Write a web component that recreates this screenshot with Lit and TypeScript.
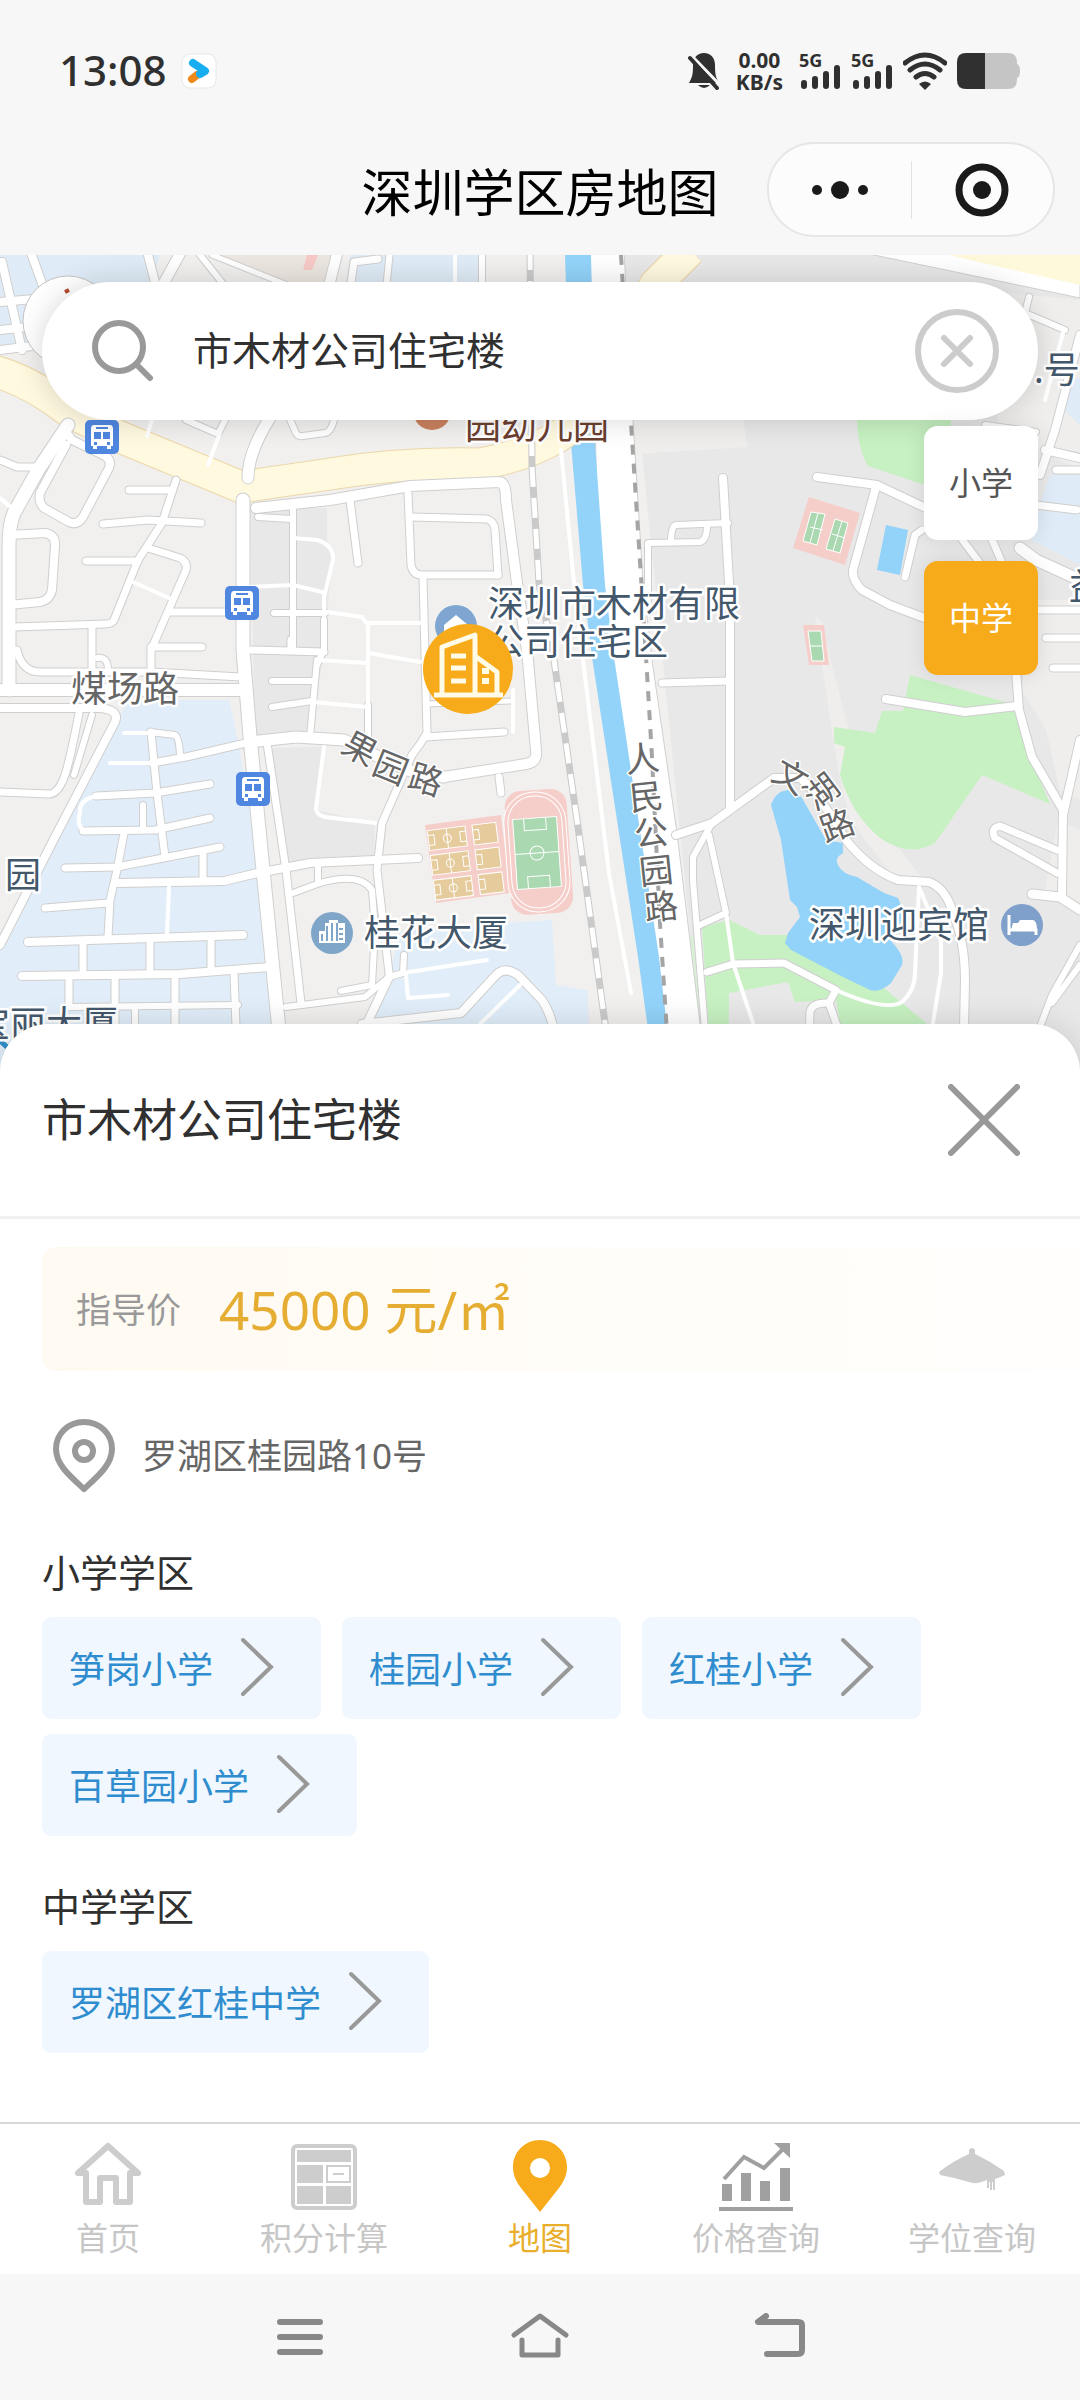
import { LitElement, html, svg, css } from 'lit';
import { customElement, property, state } from 'lit/decorators.js';
import { classMap } from 'lit/directives/class-map.js';

interface SchoolGroup {
  title: string;
  schools: string[];
}

interface TabLink {
  name: string;
  href: string;
  icon: unknown;
}

// Outlined white streets: [stroke width, path]
type Road = [number, string];

const ROADS: Road[] = [
  // West side
  [13, 'M68 425 L38 470 L14 513 Q9 525 9 545 V690'],
  [8, 'M66 432 L72 440 L105 456 Q112 460 109 468 L83 517 Q77 526 69 522 L44 508 Q38 502 40 493 L66 445'],
  [7, 'M0 460 L17 467 H38'],
  [8, 'M9 535 L45 533 Q56 535 55 546 L52 590 Q50 600 40 602 L9 605'],
  [7, 'M129 490 H170'],
  [7, 'M176 480 L162 523 L138 560 L114 620 Q112 624 105 624 L14 627'],
  [7, 'M103 524 L148 520 L201 523'],
  [7, 'M86 561 H138'],
  [7, 'M148 548 L180 558 Q188 562 186 570 L151 650 V678'],
  [7, 'M169 612 H243'],
  [7, 'M92 625 V668'],
  [6, 'M97 658 Q107 656 108 668'],
  [7, 'M151 647 H202'],
  [12, 'M0 690 H245'],
  [7, 'M17 650 Q22 672 40 672 L151 672 L241 677'],
  [8, 'M148 255 L157 290'],
  [10, 'M182 250 L160 290'],
  [6, 'M200 255 L228 290'],
  [5, 'M212 255 L290 286'],
  [10, 'M338 250 L328 290'],
  [7, 'M350 290 L354 262 L378 259'],
  [6, 'M390 250 L386 290'],
  [6, 'M482 250 V290'],
  [11, 'M275 410 Q248 450 248 478'],
  [6, 'M186 420 L218 434 L226 418'],
  [6, 'M288 415 L296 433 Q298 437 303 436 L325 433 Q332 432 335 415'],
  [8, 'M0 708 H100 Q120 710 115 722 L55 837 L0 945'],
  [7, 'M79 713 Q70 760 65 775 Q58 795 48 794 L0 792'],
  [6, 'M92 715 L74 775'],
  [8, 'M0 302 L45 298 M0 330 L45 325 M0 350 L48 344 M2 262 L22 350 M30 250 L48 300'],
  // Blue blocks
  [6, 'M150 732 L175 735 Q179 737 180 755'],
  [7, 'M151 732 L157 793 L165 857'],
  [7, 'M152 763 L186 757 L250 742'],
  [7, 'M96 796 L155 793 L210 784'],
  [7, 'M83 831 L155 830 L210 818'],
  [6, 'M143 805 V830'],
  [7, 'M65 868 L117 867 L220 847'],
  [7, 'M124 833 L117 870 L110 900 L108 937'],
  [8, 'M119 883 L224 881 L258 873 L310 863 L418 858'],
  [7, 'M203 853 V880'],
  [7, 'M45 908 L108 903'],
  [8, 'M28 942 L243 935'],
  [7, 'M83 943 V973 M150 940 V973 M211 938 V970'],
  [8, 'M22 976 L180 974 L269 967'],
  [7, 'M69 977 V1007 M115 977 V1080 M175 975 V1080 M234 973 L238 1080'],
  [6, 'M72 1007 L238 1005 M135 1010 V1060'],
  // Centre
  [13, 'M243 500 L243 650 L250 737 L263 870 L284 1080'],
  [10, 'M256 508 L330 500 L410 486 L499 482 Q506 482 506 500 L517 583 L527 650 L536 750 Q538 762 526 764 L444 777'],
  [6, 'M258 517 L291 519'],
  [6, 'M293 510 V650'],
  [6, 'M317 660 L310 737'],
  [6, 'M324 620 V650 L317 665'],
  [6, 'M274 613 L325 613'],
  [7, 'M251 650 L324 652 M291 640 V650'],
  [6, 'M272 681 H312 M272 707 L312 701'],
  [11, 'M250 742 L296 737 L344 740 L379 757 L413 772 L444 777'],
  [7, 'M350 500 L358 563'],
  [7, 'M408 493 L411 565 Q413 575 422 575 H498'],
  [7, 'M412 517 L487 519 Q494 521 495 530 L498 575'],
  [7, 'M423 578 L427 733 Q420 745 412 755 L382 823 L377 870 L389 973'],
  [6, 'M368 705 V735'],
  [7, 'M425 737 L504 732'],
  [5, 'M427 704 L510 701'],
  [7, 'M499 777 L501 793'],
  [7, 'M267 743 L286 870 L301 1003'],
  [6, 'M293 893 L320 883 Q360 872 372 890 L375 930 L372 985 L341 991'],
  [6, 'M318 867 V883'],
  [6, 'M286 1007 L365 997 L389 977 L403 973 L404 955'],
  [8, 'M389 977 L340 1080'],
  [8, 'M362 1024 L461 1013 L496 975 Q505 966 518 975 L542 1000 Q552 1015 556 1040'],
  // East side
  [8, 'M723 478 L730 600 V807'],
  [6, 'M728 523 L676 525 Q671 526 671 542 M648 600 V543 L700 542 Q707 540 707 525'],
  [8, 'M817 477 L877 485 L930 510 L960 525'],
  [8, 'M876 487 L853 570 Q852 580 862 590 L890 605 L930 620'],
  [7, 'M922 530 L915 535 L905 577'],
  [7, 'M955 530 L985 570 M990 535 L1006 572'],
  [11, 'M1020 548 L1036 560 L1080 580'],
  [7, 'M1036 505 L1077 510'],
  [7, 'M1056 470 H1080'],
  [8, 'M1045 450 L1080 458'],
  [8, 'M1080 335 L1055 430 L1040 475'],
  [6, 'M1029 297 L1025 313 L1065 330'],
  [6, 'M985 425 L1036 432'],
  [7, 'M1030 610 H1080'],
  [7, 'M1046 638 H1080 M1053 668 H1080'],
  [7, 'M662 683 L728 681'],
  [8, 'M676 835 L712 823 L774 778 L800 778 Q820 795 846 840 Q870 870 898 880 L929 882 Q945 888 952 910 Q965 940 965 980 L963 1080'],
  [6, 'M712 823 L693 857 V880 L709 1080'],
  [6, 'M709 835 L726 913 L700 925'],
  [7, 'M707 972 L733 964 L784 963 L836 990 L829 1003 Q812 1002 810 1012 L808 1080 M829 1003 L842 1040'],
  [8, 'M886 699 L965 712 L1017 706'],
  [8, 'M1016 670 L1019 710 L1032 757 L1063 810 L1062 897'],
  [7, 'M1057 850 L1000 826 Q990 828 995 838 L1057 873'],
  [8, 'M1080 740 L1063 815'],
  [9, 'M1032 894 L1060 897 L1080 910'],
  [6, 'M1080 945 L1052 995 L1035 1040 M1080 965 L1052 1003'],
];

// Hairline footpaths without an outline
const PATHS = [
  'M133 582 L169 598',
  'M220 433 L208 465',
  'M152 420 L147 436',
  'M0 498 L14 510',
  'M293 538 L317 540 Q334 545 333 560 L324 597 V643',
  'M251 587 L293 585 L322 592',
  'M327 612 L362 617 L368 625 V705 M368 623 H425',
  'M317 660 L367 663 M368 653 L420 662 M313 702 L367 707',
  'M324 747 L316 808 Q316 815 325 817 L375 823',
  'M513 732 V690',
  'M96 796 Q79 800 80 812 Q76 825 84 831',
  'M110 763 H152 M124 733 H152',
  'M169 887 L167 935',
  'M406 975 L408 998 L448 995 M403 973 L487 960',
  'M520 985 L480 1024',
  'M561 450 L574 583 L583 660 L609 873 L631 993',
  'M726 913 L733 963 L753 1023',
  'M836 990 Q885 1012 902 1002 Q915 990 915 973 L919 887 L941 940 V973 L933 1023',
  'M455 255 V290',
  'M1063 333 L1045 400',
];

const BUS_STOPS = [[102, 437], [242, 603], [253, 789]];

const mapArt = svg`
  <rect x="0" y="255" width="1080" height="825" fill="#f1f0ee"></rect>
  <!-- blocks -->
  <path fill="#dfebf6" d="M0 255 H160 L150 290 H50 L45 345 L0 350 Z M350 255 H486 V290 H345 Z"></path>
  <path fill="#ece6e0" d="M210 255 H335 L325 290 H290 Z"></path>
  <path fill="#f6c9c6" d="M307 255 H318 L312 270 H303 Z"></path>
  <path fill="#e1eef9" d="M124 708 L130 700 H229 L238 740 L255 840 L280 1080 H0 V947 L55 837 Z"></path>
  <path fill="#e1eef9" d="M389 975 L400 932 L470 925 L552 920 L556 985 L588 990 L590 1080 H340 Z"></path>
  <path fill="#e8e8e8" d="M250 508 H327 V540 L332 560 L324 650 L310 737 H255 Z
    M270 748 L324 747 L316 810 L375 823 L374 862 L286 868 Z"></path>
  <path fill="#e8e8e8" d="M622 255 H1080 V1080 H705 Z"></path>
  <path fill="#efeeec" d="M632 420 H743 L748 447 L636 454 Z M1022 690 L1030 600 H1080 V800 L1060 790 L1046 730 Z
    M975 290 L1080 300 V470 L1000 430 Z M1058 820 L1080 830 V905 L1045 890 Z"></path>
  <path fill="#efeeec" d="M778 578 Q800 600 822 622 L832 665 L848 727 L870 825 L900 850 L926 882 L890 872 L850 820 L838 770 L822 665 L815 615 Z"></path>
  <path fill="#dfebf6" d="M1050 475 H1080 V565 L1028 538 Z M1068 378 H1080 V425 L1064 410 Z"></path>
  <!-- parks -->
  <g fill="#c7f1c2">
    <path d="M857 415 H951 V480 L922 484 L868 466 Q858 450 857 420 Z"></path>
    <path d="M910 675 L1005 702 L1018 710 L1025 745 L1050 804 L982 775 L935 843 Q910 858 880 838 Q852 815 840 775 L845 747 L834 743 V727 L875 733 L882 711 L903 711 Z"></path>
    <path d="M702 927 L729 920 L760 935 H790 L884 988 L926 1023 L980 1080 H870 L836 1000 L795 1002 L788 982 L729 993 L728 1080 H712 Z M836 1000 L926 1023 V1080 H850 Z"></path>
  </g>
  <path fill="#d9efd6" d="M688 937 H696 L710 1080 H700 Z"></path>
  <!-- sports grounds -->
  <path fill="#f5ceca" d="M809 497 L860 513 L845 565 L793 548 Z M803 625 H824 L829 665 H809 Z M425 825 L501 815 L510 893 L436 903 Z"></path>
  <path fill="#a9d8b1" stroke="#fff" d="M811 512 L825 514 L817 545 L803 541 Z M835 519 L848 523 L840 553 L826 549 Z M808 631 H821 L824 661 H812 Z
    M810 527 L823 530 M832 534 L845 538 M809 646 H823 M818 513 L810 543 M842 521 L833 551"></path>
  <g transform="rotate(-7 467 859)">
    ${[0, 1, 2].map((row) => svg`
      <rect x="431" y=${826 + row * 25} width="38" height="20" fill="#e6cb9c" stroke="#fff"></rect>
      <rect x="476" y=${826 + row * 25} width="24" height="20" fill="#e6cb9c" stroke="#fff"></rect>
      <circle cx="450" cy=${836 + row * 25} r="4" fill="none" stroke="#fff"></circle>
      <path d=${`M431 ${831 + row * 25} h6 v10 h-6 M469 ${831 + row * 25} h-6 v10 h6 M450 ${826 + row * 25} v20 M476 ${831 + row * 25} h6 v10 h-6`} fill="none" stroke="#fff"></path>
    `)}
  </g>
  <g transform="rotate(-4 537 853)">
    <rect x="508" y="790" width="62" height="124" rx="16" fill="#f5ceca"></rect>
    <rect x="506" y="792" width="62" height="120" rx="30" fill="#f5ceca" stroke="#fff"></rect>
    <rect x="510" y="796" width="54" height="112" rx="26" fill="none" stroke="#fff"></rect>
    <rect x="515" y="818" width="44" height="70" fill="#a9d8b1" stroke="#fff"></rect>
    <path d="M515 853 h44 M526 818 v12 h22 v-12 M526 888 v-12 h22 v12" fill="none" stroke="#fff"></path>
    <circle cx="537" cy="853" r="7" fill="none" stroke="#fff"></circle>
  </g>
  <!-- expressway and river -->
  <path fill="#fff" stroke="#d0d0d0" d="M590 250 H624 L633 420 L643 583 L652 660 L677 833 L708 1090 H660 L600 600 Z"></path>
  <path fill="#93d3fa" d="M565 255 H591 L595 443 L605 585 L614 657 L659 957 L673 1080 H655 L638 957 L592 657 L583 585 L571 443 Z"></path>
  <path fill="#93d3fa" d="M886 525 L908 530 L900 575 L877 570 Z"></path>
  <path fill="none" stroke="#a5a5a5" stroke-width="4" stroke-dasharray="10 9"
    d="M621 255 L631 423 L641 577 L647 673 L652 757 L660 923 L670 1080"></path>
  <!-- yellow avenue -->
  <path fill="#fff" stroke="#cfcfcf" d="M850 250 L1080 298 V250 Z"></path>
  <path fill="#fff9dc" d="M926 250 L1080 285 V250 Z"></path>
  <g fill="none" stroke-linejoin="round">
    <path stroke="#ecd7a8" stroke-width="33" d="M-10 370 Q30 380 70 412 L120 437 L241 487 L330 474 Q400 462 480 464 Q560 450 600 400 L655 285 L690 250"></path>
    <path stroke="#fff9e0" stroke-width="31" d="M-10 370 Q30 380 70 412 L120 437 L241 487 L330 474 Q400 462 480 464 Q560 450 600 400 L655 285 L690 250"></path>
  </g>
  <!-- railway -->
  <g fill="none">
    <path stroke="#cacaca" stroke-width="7" d="M530 250 L532 467 L539 583 L554 660 L578 827 L605 1023 L612 1080"></path>
    <path stroke="#fff" stroke-width="5" stroke-dasharray="20 11" d="M530 250 L532 467 L539 583 L554 660 L578 827 L605 1023 L612 1080"></path>
  </g>
  <!-- lake -->
  <path fill="#93d3fa" d="M771 805 Q776 790 790 790 Q800 792 806 805 L826 840 L843 843 V853 Q834 858 838 865 Q842 874 857 877 L884 893 L898 898 L905 915 L890 940 Q905 955 902 965 L891 983 Q880 993 870 990 L843 977 L791 950 L785 943 L788 933 L800 917 L797 907 L790 900 L781 840 Z"></path>
  <!-- streets -->
  <g fill="none" stroke-linecap="round" stroke-linejoin="round">
    ${ROADS.map(([w, d]) => svg`<path d=${d} stroke="#cfcfcf" stroke-width=${w + 2}></path>`)}
    ${PATHS.map((d) => svg`<path d=${d} stroke="#fff" stroke-width="4"></path>`)}
    ${ROADS.map(([w, d]) => svg`<path d=${d} stroke="#fff" stroke-width=${w}></path>`)}
  </g>
  <!-- points of interest -->
  ${BUS_STOPS.map(([x, y]) => svg`
    <g transform=${`translate(${x} ${y})`}>
      <rect x="-17" y="-17" width="34" height="34" rx="5" fill="#4f86e0"></rect>
      <path fill="#fff" d="M-8 -12 H8 Q11 -12 11 -8 V9 H9 V12 H5 V9 H-5 V12 H-9 V9 H-11 V-8 Q-11 -12 -8 -12 Z"></path>
      <path fill="#4f86e0" d="M-6 -10 H6 V-8 H-6 Z M-8 -5 H-1 V2 H-8 Z M1 -5 H8 V2 H1 Z M-8 5 H-5 V8 H-8 Z M5 5 H8 V8 H5 Z"></path>
    </g>
  `)}
  <circle cx="432" cy="411" r="19" fill="#c9805f"></circle>
  <path d="M422 416 H442" stroke="#fff" stroke-width="4"></path>
  <circle cx="332" cy="933" r="21" fill="#7fa6c9"></circle>
  <path fill="#fff" d="M319 943 V931 H325 V923 H329 V920 H338 V923 H345 V943 Z"></path>
  <path stroke="#7fa6c9" stroke-width="2" d="M327 926 V941 M332 923 V941 M337 923 V941 M339 929 H343 M339 934 H343 M339 939 H343 M322 934 V941"></path>
  <circle cx="1022" cy="925" r="21" fill="#7fa0cb"></circle>
  <path fill="none" stroke="#fff" stroke-width="3" d="M1009 915 V935 M1009 930 H1036 V935"></path>
  <path fill="#fff" d="M1013 923 H1018 L1020 920 H1033 Q1037 921 1037 930 H1011 Z"></path>
  <circle cx="456" cy="626" r="21" fill="#7fa6d0"></circle>
  <path fill="#fff" d="M444 625 L456 615 L468 625 V640 H444 Z"></path>
  <circle cx="68" cy="321" r="45" fill="#fff" stroke="#c4c4c4"></circle>
  <path d="M65 292 L69 290" stroke="#b5482c" stroke-width="4"></path>
  <path d="M0 1041 L7 1047" stroke="#2f8fc8" stroke-width="5"></path>
  <!-- labels -->
  <g class="label place">
    <text x="465" y="439" class="brown">园幼儿园</text>
    <text x="1034" y="383">.号</text>
    <text x="1069" y="600">益</text>
    <text x="488" y="617">深圳市木材有限</text>
    <text x="488" y="655">公司住宅区</text>
    <text x="364" y="946">桂花大厦</text>
    <text x="809" y="938">深圳迎宾馆</text>
    <text x="5" y="888">园</text>
    <text x="-26" y="1037">宝丽大厦</text>
  </g>
  <g class="label street">
    <text x="71" y="702">煤场路</text>
    <g class="turned">
      <text transform="translate(360 748) rotate(28)">果</text>
      <text transform="translate(391 767) rotate(22)">园</text>
      <text transform="translate(426 779) rotate(17)">路</text>
      <text transform="translate(642 758) rotate(-6)">人</text>
      <text transform="translate(646 796) rotate(-6)">民</text>
      <text transform="translate(651 832) rotate(-6)">公</text>
      <text transform="translate(656 870) rotate(-6)">园</text>
      <text transform="translate(661 906) rotate(-6)">路</text>
      <text transform="translate(791 776) rotate(30)">文</text>
      <text transform="translate(821 791) rotate(-37)">湖</text>
      <text transform="translate(837 825) rotate(-20)">路</text>
    </g>
  </g>
  <!-- selected estate marker -->
  <circle cx="468" cy="669" r="45" fill="#f7ab1b"></circle>
  <path fill="none" stroke="#fffbe6" stroke-width="5" stroke-linejoin="round"
    d="M434 695 H503 M442 695 V647 L475 635 V695 M475 656 L497 672 V695 M451 656 H466 M451 668 H466 M451 681 H466"></path>
  <path fill="#fffbe6" d="M482 668 H489 V674 H482 Z M482 678 H489 V684 H482 Z"></path>
`;

const HOME_ICON = svg`
  <path d="M6 33 L36 6 L66 33 M14 33 V62 H28 V38 H44 V62 H58 V33 M6 33 H14 M58 33 H66" fill="none" stroke="#cdcdcd" stroke-width="6" stroke-linejoin="round" stroke-linecap="round"></path>`;
const CALC_ICON = svg`
  <rect x="5" y="6" width="62" height="62" rx="4" fill="none" stroke="#cdcdcd" stroke-width="4"></rect>
  <path fill="#cdcdcd" d="M9 10 H63 V22 H9 Z M9 25 H35 V43 H9 Z M9 46 H35 V64 H9 Z M38 46 H63 V64 H38 Z"></path>
  <path d="M39 26 H62 V42 H39 Z M45 34 H56" fill="none" stroke="#cdcdcd" stroke-width="2"></path>`;
const PIN_ICON = svg`
  <path fill="#f7ab1b" fill-rule="evenodd" d="M36 0 C51 0 63 12 63 27 C63 35 60 41 55 48 L36 72 L17 48 C12 41 9 35 9 27 C9 12 21 0 36 0 Z M36 18 A10 10 0 1 0 36 38 A10 10 0 1 0 36 18 Z"></path>`;
const CHART_ICON = svg`
  <path fill="#a0a0a0" d="M-1 67 H73 V71 H-1 Z M2 44 H12 V61 H2 Z M21 33 H31 V61 H21 Z M40 41 H50 V61 H40 Z M60 28 H70 V61 H60 Z M54 3 H70 V18 Z"></path>
  <path d="M4 39 L24 17 L44 28 L64 8" fill="none" stroke="#a0a0a0" stroke-width="4"></path>`;
const CAP_ICON = svg`
  <path fill="#cdcdcd" d="M33 10 Q36 6 39 10 V14 Q54 21 68 31 L69 35 L62 38 L59 39 V50 H57 V42 L56 42 V50 H54 V42 L53 42 V48 H51 V40 Q40 45 33 42 L18 38 L4 35 L3 32 Q17 21 33 14 Z"></path>`;

@customElement('status-bar')
export class StatusBar extends LitElement {
  static styles = css`
    :host {
      display: flex;
      align-items: center;
      justify-content: space-between;
      height: 142px;
      padding: 0 59px;
      color: #303030;
    }
    .side {
      display: flex;
      align-items: center;
    }
    .left {
      gap: 14px;
    }
    .right {
      gap: 10px;
    }
    .time {
      padding-bottom: 3px;
      font-size: 42px;
      font-weight: 500;
    }
    .speed {
      display: flex;
      flex-direction: column;
      align-items: center;
      margin: 0 6px;
      font-size: 21px;
      font-weight: 700;
      line-height: 22px;
    }
    .signal {
      display: flex;
      flex-direction: column;
      width: 42px;
      font-size: 18px;
      font-weight: 700;
      line-height: 14px;
    }
    .signal svg {
      margin-top: -3px;
    }
    svg {
      display: block;
    }
  `;

  signal() {
    return html`
      <div class="signal">
        <span>5G</span>
        <svg width="42" height="26" viewBox="0 0 42 26">
          <path d="M5 19 V22 M16 15 V22 M27 10 V22 M38 4 V22" stroke="#303030" stroke-width="6" stroke-linecap="round"></path>
        </svg>
      </div>
    `;
  }

  render() {
    return html`
      <div class="side left">
        <span class="time">13:08</span>
        <svg width="36" height="36" viewBox="0 0 36 36">
          <rect x="1" y="1" width="34" height="34" rx="8" fill="#fff" stroke="#e8e8e8"></rect>
          <path d="M11 26 L16 22" stroke="#f08a1c" stroke-width="8" stroke-linecap="round"></path>
          <path d="M12 10 L24 18 L19 21" fill="none" stroke="#17aef0" stroke-width="8" stroke-linecap="round" stroke-linejoin="round"></path>
        </svg>
      </div>
      <div class="side right">
        <svg width="32" height="38" viewBox="0 0 32 38">
          <path fill="#303030" d="M16 1 C23 1 27 6 27 13 C27 24 28 25 31 31 H1 C4 25 5 24 5 13 C5 6 9 1 16 1 Z M10 33 H22 Q16 39 10 33 Z"></path>
          <path d="M3 3 L32 33" stroke="#f7f7f7" stroke-width="3"></path>
          <path d="M2 6 L29 36" stroke="#303030" stroke-width="4" stroke-linecap="round"></path>
        </svg>
        <div class="speed"><span>0.00</span><span>KB/s</span></div>
        ${this.signal()}${this.signal()}
        <svg width="44" height="38" viewBox="1 0 44 38">
          <path d="M3 11 Q23 -5 43 11 M8 18 Q23 6 38 18 M14 25 Q23 18 32 25" fill="none" stroke="#303030" stroke-width="5" stroke-linecap="round"></path>
          <path d="M17 32 Q23 27 29 32 L23 38 Z" fill="#303030"></path>
        </svg>
        <svg width="64" height="36" viewBox="0 0 64 36">
          <path d="M28 0 H51 Q60 0 60 9 V11 Q63 12 63 18 Q63 24 60 25 V27 Q60 36 51 36 H28 Z" fill="#c5c5c5"></path>
          <path d="M9 0 H28 V36 H9 Q0 36 0 27 V9 Q0 0 9 0 Z" fill="#303030"></path>
        </svg>
      </div>
    `;
  }
}

@customElement('tab-bar')
export class TabBar extends LitElement {
  static styles = css`
    :host {
      display: block;
      z-index: 2;
      background-color: #fff;
      border-top: 2px solid #d8d8d8;
    }
    nav {
      display: grid;
      grid-template-columns: repeat(5, 1fr);
      padding: 16px 0 18px;
    }
    .tab {
      display: flex;
      flex-direction: column;
      align-items: center;
      gap: 8px;
      color: #c6c6c6;
      font-size: 32px;
      line-height: 36px;
      text-decoration: none;
    }
    .tab.active {
      color: #e8ae2c;
    }
    svg {
      display: block;
      overflow: visible;
    }
  `;

  @property()
  active = '地图';

  @property({ type: Array })
  links: TabLink[] = [
    { name: '首页', href: '#home', icon: HOME_ICON },
    { name: '积分计算', href: '#score', icon: CALC_ICON },
    { name: '地图', href: '#map', icon: PIN_ICON },
    { name: '价格查询', href: '#price', icon: CHART_ICON },
    { name: '学位查询', href: '#seat', icon: CAP_ICON },
  ];

  render() {
    return html`
      <nav>
        ${this.links.map(
          (link) => html`
            <a href="${link.href}" class=${classMap({ tab: true, active: link.name === this.active })}>
              <svg width="72" height="72" viewBox="0 0 72 72">${link.icon}</svg>
              ${link.name}
            </a>
          `
        )}
      </nav>
    `;
  }
}

@customElement('app-root')
export class AppRoot extends LitElement {
  static styles = css`
    :host {
      display: flex;
      flex-direction: column;
      min-height: 100vh;
      background-color: #f7f7f7;
      color: #303030;
      font-family: 'Noto Sans', 'Noto Sans CJK SC', sans-serif;
    }
    button {
      border: 0;
      padding: 0;
      background: none;
      color: inherit;
      font: inherit;
      cursor: pointer;
    }
    svg {
      display: block;
    }

    /* Title bar */
    .title-bar {
      display: grid;
      grid-template-columns: 1fr auto 1fr;
      align-items: center;
      padding: 0 25px 18px;
    }
    h1 {
      grid-column: 2;
      margin: 0;
      padding-top: 4px;
      color: #000;
      font-size: 51px;
      font-weight: 400;
      line-height: 60px;
    }
    .capsule {
      justify-self: end;
      display: flex;
      box-sizing: border-box;
      width: 288px;
      height: 95px;
      border: 2px solid #e6e6e6;
      border-radius: 48px;
      background-color: #fcfcfc;
    }
    .capsule button {
      flex: 1;
      display: grid;
      place-items: center;
    }
    .capsule .divider {
      align-self: center;
      width: 1px;
      height: 58px;
      background-color: #e2e2e2;
    }

    /* Map */
    .map {
      display: grid;
    }
    .map > * {
      grid-area: 1 / 1;
      min-width: 0;
    }
    .map-art {
      width: 100%;
      height: auto;
    }
    .label text {
      font-size: 36px;
      stroke: #fff;
      stroke-width: 5px;
      stroke-linejoin: round;
      paint-order: stroke;
    }
    .place text {
      fill: #44586c;
    }
    .place .brown {
      fill: #6b3f30;
    }
    .street text {
      fill: #666;
    }
    .turned text {
      font-size: 34px;
      stroke-width: 3px;
      text-anchor: middle;
      dominant-baseline: central;
    }
    .map-controls {
      display: flex;
      flex-direction: column;
      align-items: flex-end;
      padding: 27px 42px;
    }
    .search {
      display: flex;
      align-items: center;
      align-self: stretch;
      box-sizing: border-box;
      height: 138px;
      padding: 0 39px 0 50px;
      gap: 39px;
      border-radius: 69px;
      background-color: #fff;
      box-shadow: 0 0 30px rgba(0, 0, 0, 0.16);
    }
    .search svg {
      flex: none;
    }
    .search input {
      flex: 1;
      min-width: 0;
      padding: 0 0 6px;
      border: 0;
      outline: 0;
      background: none;
      color: #303030;
      font: inherit;
      font-size: 39px;
    }
    .levels {
      display: flex;
      flex-direction: column;
      gap: 21px;
      margin-top: 6px;
    }
    .levels button {
      width: 114px;
      height: 114px;
      padding-bottom: 4px;
      border-radius: 14px;
      background-color: #fff;
      box-shadow: 0 0 20px rgba(0, 0, 0, 0.1);
      color: #555;
      font-size: 32px;
    }
    .levels .active {
      background-color: #f7ab1b;
      color: #fff;
    }

    /* Detail sheet */
    .sheet {
      flex: 1;
      z-index: 1;
      margin-top: -56px;
      border-radius: 48px 48px 0 0;
      background-color: #fff;
      box-shadow: 0 0 30px rgba(0, 0, 0, 0.14);
    }
    .sheet-head {
      display: flex;
      align-items: center;
      justify-content: space-between;
      height: 192px;
      padding: 0 60px 0 42px;
      border-bottom: 3px solid #f0f0f0;
    }
    h2 {
      margin: 0;
      font-size: 45px;
      font-weight: 400;
      line-height: 54px;
    }
    .price {
      display: flex;
      align-items: center;
      box-sizing: border-box;
      gap: 38px;
      height: 124px;
      margin: 28px 0 48px 42px;
      padding: 0 0 4px 34px;
      border-radius: 14px 0 0 14px;
      background-image: linear-gradient(to right, #fffaf1, #fffdf9 60%, #fffefc);
    }
    .price-name {
      color: #999;
      font-size: 35px;
    }
    .price-value {
      color: #e5ae33;
      font-size: 53px;
    }
    .address {
      display: flex;
      align-items: center;
      gap: 27px;
      margin: 0 42px 52px;
      padding-left: 11px;
      color: #666;
      font-size: 35px;
      line-height: 54px;
    }
    .group {
      margin: 0 42px 43px;
    }
    h3 {
      margin: 0 0 18px;
      font-size: 38px;
      font-weight: 400;
      line-height: 54px;
    }
    .schools {
      display: flex;
      flex-wrap: wrap;
      gap: 15px 21px;
    }
    .school {
      display: flex;
      align-items: center;
      box-sizing: border-box;
      gap: 14px;
      height: 102px;
      padding: 0 34px 2px 27px;
      border-radius: 9px;
      background-color: #f0f7fe;
      color: #2f8dcf;
      font-size: 36px;
      text-decoration: none;
    }

    /* System keys */
    .system-keys {
      display: grid;
      grid-template-columns: repeat(3, 240px);
      justify-content: center;
      height: 126px;
    }
    .system-keys button {
      display: grid;
      place-items: center;
    }
  `;

  @property({ type: Array })
  groups: SchoolGroup[] = [
    { title: '小学学区', schools: ['笋岗小学', '桂园小学', '红桂小学', '百草园小学'] },
    { title: '中学学区', schools: ['罗湖区红桂中学'] },
  ];

  @state()
  level = '中学';

  render() {
    return html`
      <status-bar></status-bar>
      <header class="title-bar">
        <h1>深圳学区房地图</h1>
        <div class="capsule">
          <button aria-label="更多">
            <svg width="60" height="24" viewBox="0 0 60 24" fill="#1a1a1a">
              <circle cx="7" cy="12" r="5"></circle>
              <circle cx="30" cy="12" r="9"></circle>
              <circle cx="53" cy="12" r="5"></circle>
            </svg>
          </button>
          <span class="divider"></span>
          <button aria-label="关闭小程序">
            <svg width="54" height="54" viewBox="0 0 54 54">
              <circle cx="27" cy="27" r="23" fill="none" stroke="#1a1a1a" stroke-width="7"></circle>
              <circle cx="27" cy="27" r="9" fill="#1a1a1a"></circle>
            </svg>
          </button>
        </div>
      </header>

      <section class="map">
        <svg class="map-art" viewBox="0 255 1080 825">${mapArt}</svg>
        <div class="map-controls">
          <div class="search">
            <svg width="62" height="62" viewBox="0 0 62 62" fill="none" stroke="#999" stroke-width="6" stroke-linecap="round">
              <circle cx="27" cy="27" r="24"></circle>
              <path d="M45 45 L58 58"></path>
            </svg>
            <input type="text" aria-label="搜索小区" .value=${'市木材公司住宅楼'} />
            <button aria-label="清空">
              <svg width="84" height="84" viewBox="0 0 84 84" fill="none" stroke="#ccc" stroke-width="6" stroke-linecap="round">
                <circle cx="42" cy="42" r="39"></circle>
                <path d="M29 29 L55 55 M55 29 L29 55"></path>
              </svg>
            </button>
          </div>
          <div class="levels">
            ${['小学', '中学'].map(
              (name) => html`
                <button class=${classMap({ active: this.level === name })} @click=${() => (this.level = name)}>${name}</button>
              `
            )}
          </div>
        </div>
      </section>

      <main class="sheet">
        <div class="sheet-head">
          <h2>市木材公司住宅楼</h2>
          <button aria-label="关闭">
            <svg width="72" height="72" viewBox="0 0 72 72" stroke="#999" stroke-width="6" stroke-linecap="round">
              <path d="M3 3 L69 69 M69 3 L3 69"></path>
            </svg>
          </button>
        </div>
        <div class="price">
          <span class="price-name">指导价</span>
          <span class="price-value">45000 元/㎡</span>
        </div>
        <div class="address">
          <svg width="62" height="74" viewBox="0 0 62 74" fill="none" stroke="#999" stroke-width="6">
            <path d="M31 3 C47 3 59 15 59 30 C59 46 44 58 31 70 C18 58 3 46 3 30 C3 15 15 3 31 3 Z" stroke-linejoin="round"></path>
            <circle cx="31" cy="32" r="9"></circle>
          </svg>
          罗湖区桂园路10号
        </div>
        ${this.groups.map(
          (group) => html`
            <section class="group">
              <h3>${group.title}</h3>
              <div class="schools">
                ${group.schools.map(
                  (school) => html`
                    <a href="#school" class="school">
                      ${school}
                      <svg width="60" height="60" viewBox="0 0 60 60">
                        <path d="M16 3 L44 30 L16 57" fill="none" stroke="#999" stroke-width="4" stroke-linecap="round"></path>
                      </svg>
                    </a>
                  `
                )}
              </div>
            </section>
          `
        )}
      </main>

      <tab-bar></tab-bar>
      <div class="system-keys">
        <button aria-label="菜单">
          <svg width="60" height="48" viewBox="0 0 60 48">
            <path d="M10 9 H50 M10 24 H50 M10 39 H50" stroke="#888" stroke-width="6" stroke-linecap="round"></path>
          </svg>
        </button>
        <button aria-label="主屏幕">
          <svg width="60" height="48" viewBox="0 0 60 48">
            <path d="M4 22 L30 3 L56 22 M12 27 V42 H48 V27" fill="none" stroke="#888" stroke-width="5" stroke-linecap="round" stroke-linejoin="round"></path>
          </svg>
        </button>
        <button aria-label="返回">
          <svg width="60" height="48" viewBox="0 0 60 48">
            <path d="M16 3 L8 9 H48 Q52 9 52 12 V37 Q52 41 48 41 H17" fill="none" stroke="#888" stroke-width="6" stroke-linecap="round" stroke-linejoin="round"></path>
          </svg>
        </button>
      </div>
    `;
  }
}

declare global {
  interface HTMLElementTagNameMap {
    'status-bar': StatusBar;
    'tab-bar': TabBar;
    'app-root': AppRoot;
  }
}
